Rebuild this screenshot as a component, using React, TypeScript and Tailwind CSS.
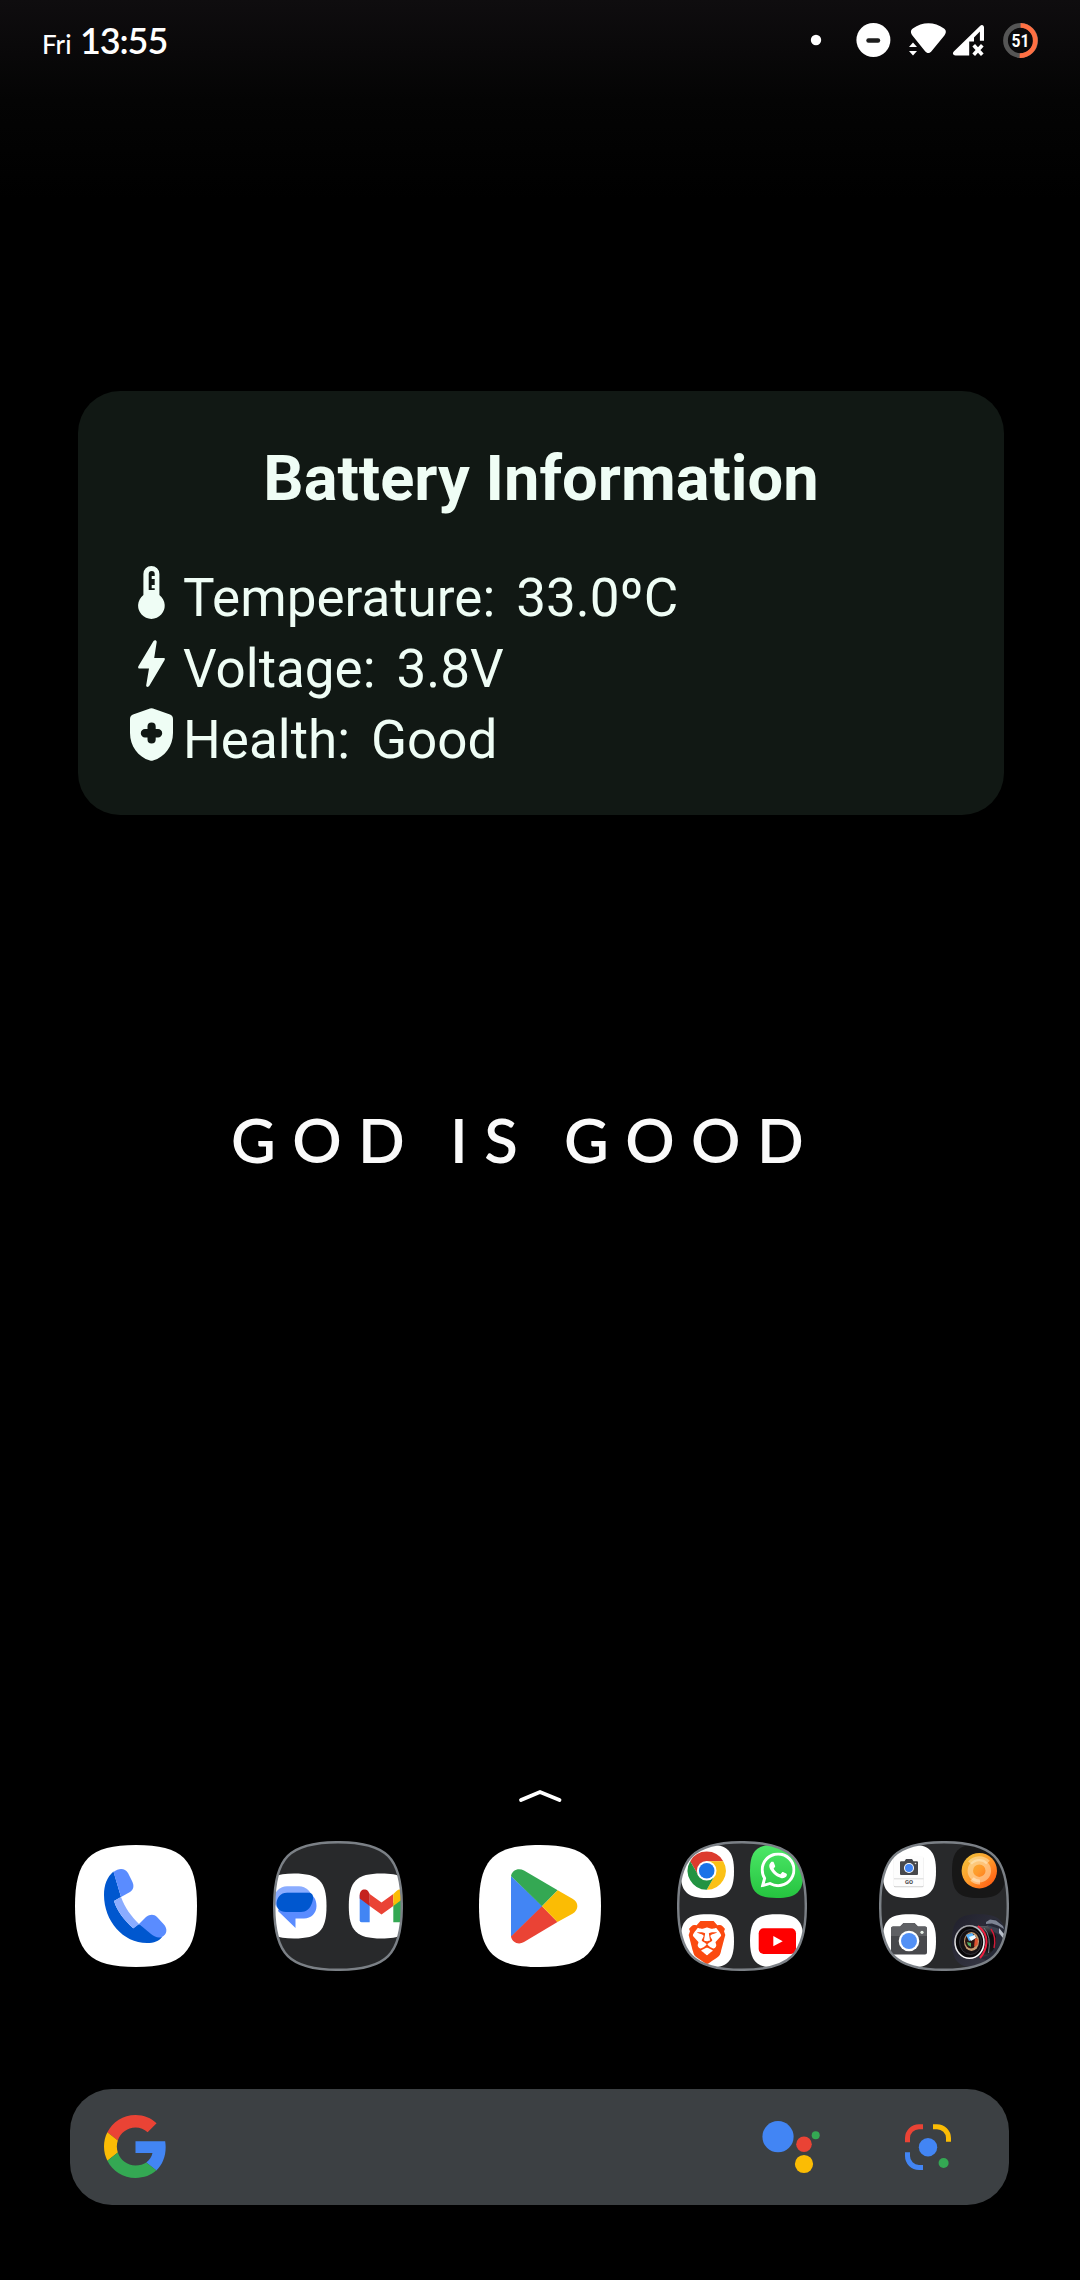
import type { ReactNode } from "react";
import { SiBrave, SiWhatsapp } from "react-icons/si";

function StatusIcons() {
  return (
    <svg className="h-[60px] w-[240px]" viewBox="800 10 240 60" fill="none">
      <circle cx="816" cy="40" r="5.2" fill="#fff" />
      <circle cx="873.4" cy="40" r="17" fill="#fff" />
      <path d="M868.5 40.5H878" stroke="#1c1c1c" strokeWidth="4.4" strokeLinecap="round" />
      <path
        d="M912.4 35.5C910.5 33.3 910.3 30.2 912.8 28.6C922.5 21.4 934.3 21.4 944 28.6C946.5 30.2 946.3 33.3 944.4 35.5L931.5 51.2C929.6 53.6 927 53.6 925.1 51.2Z"
        fill="#fff"
      />
      <path d="M913 42.6L917 47H909ZM913 55.4L917 51H909Z" fill="#fff" />
      <path
        d="M955.5 55.5H969.2V41.4H974V37.4L979.9 31.5V40.8H984V27.5C984 25 981.7 24.3 980 26L953.8 51.6C952.2 53.3 953 55.5 955.5 55.5Z"
        fill="#fff"
      />
      <path d="M973.7 45.2L982.3 54.8M982.3 45.2L973.7 54.8" stroke="#fff" strokeWidth="3.6" />
      <circle cx="1020.6" cy="40.5" r="15.1" stroke="#555" strokeWidth="4.8" />
      <path d="M1020.6 25.4A15.1 15.1 0 1 1 1019.7 55.6" stroke="#ff7043" strokeWidth="4.8" />
      <text
        x="1020.6"
        y="46.6"
        textAnchor="middle"
        fill="#fff"
        className="font-['Roboto',sans-serif] text-[17.5px] font-bold"
        textLength="18"
        lengthAdjust="spacingAndGlyphs"
      >
        51
      </text>
    </svg>
  );
}

function StatusBar() {
  return (
    <header className="flex h-[80px] shrink-0 items-center justify-between pr-10 pl-[42px]">
      <div className="flex items-baseline font-['Lato',sans-serif] text-white">
        <span className="w-[38px] text-[26px] leading-none font-medium">Fri</span>
        <span className="text-[36px] leading-none font-semibold tracking-[-1.1px]">13:55</span>
      </div>
      <StatusIcons />
    </header>
  );
}

function Row({ icon, label, value }: { icon: ReactNode; label: string; value: string }) {
  return (
    <div className="flex h-[71px] items-center">
      <div className="-mt-[13px] mr-[10px] flex w-[43px] shrink-0 justify-center">{icon}</div>
      <span className="mr-[21px] text-[53px] leading-none">{label}</span>
      <span className="text-[53px] leading-none">{value}</span>
    </div>
  );
}

function BatteryCard() {
  return (
    <section className="mt-[311px] ml-[78px] h-[424px] w-[926px] shrink-0 rounded-[42px] bg-[#111814] pt-[55px] font-['Roboto',sans-serif] text-[#effdf5]">
      <h1 className="text-center text-[63.2px] leading-[64px] font-bold">Battery Information</h1>
      <div className="mt-[53px] pl-[52px]">
        <Row
          label="Temperature:"
          value="33.0ºC"
          icon={
            <svg className="h-[53px] w-[27px]" viewBox="0 0 27 53">
              <path
                fill="currentColor"
                fillRule="evenodd"
                d="M5.4 8a8 8 0 0 1 16 0V29A13.3 13.3 0 1 1 5.4 29ZM10.7 8V24H16.7V22.3H13.7V19H16.7V13H13.7V10H16.7V8a3 3 0 0 0-6 0Z"
              />
            </svg>
          }
        />
        <Row
          label="Voltage:"
          value="3.8V"
          icon={
            <svg className="h-[47px] w-[27px]" viewBox="0 0 27 47">
              <path
                fill="currentColor"
                d="M15.5 1C16.5-.5 18.8 0 18.7 2L16.2 18H25.5C27 18 27.2 19 26.5 20.2L11.5 45.5C10.5 47.5 8 47.3 8.2 45.2L11 28.5H1.5C0 28.5-.2 27.2.5 26Z"
              />
            </svg>
          }
        />
        <Row
          label="Health:"
          value="Good"
          icon={
            <svg className="h-[53px] w-[43px]" viewBox="0 0 43 53">
              <path
                fill="currentColor"
                fillRule="evenodd"
                d="M20 .5a4.5 4.5 0 0 1 3 0L40 6.5Q43 7.7 43 11V25C43 38 35 49 23 52.6a5 5 0 0 1-3 0C8 49 0 38 0 25V11Q0 7.7 3 6.5ZM17.5 18.5V21H15a4.2 4.2 0 0 0 0 8.4H17.5V31.5a4.1 4.1 0 0 0 8.2 0V29.4H28a4.2 4.2 0 0 0 0-8.4H25.7V18.5a4.1 4.1 0 0 0-8.2 0Z"
              />
            </svg>
          }
        />
      </div>
    </section>
  );
}

function Motto() {
  return (
    <div className="mt-[294px] flex h-[62px] shrink-0 items-center pl-[231px] font-['Lato',sans-serif] text-[61.5px] leading-none font-semibold tracking-[16.4px] text-[#fafafa] blur-[0.5px]">
      <span className="w-[219px]">GOD</span>
      <span className="w-[114px]">IS</span>
      <span>GOOD</span>
    </div>
  );
}

const SQUIRCLE = "M50 0C12 0 0 12 0 50S12 100 50 100S100 88 100 50S88 0 50 0Z";

function Tile({ x, y, size, fill = "#fff" }: { x: number; y: number; size: number; fill?: string }) {
  return <path d={SQUIRCLE} fill={fill} transform={`translate(${x} ${y}) scale(${size / 100})`} />;
}

function PhoneApp() {
  return (
    <svg className="size-[122px]" viewBox="0 0 122 122">
      <Tile x={0} y={0} size={122} />
      <path fill="#0057cf" d="M38.5 26.5C32 32 29 40 29 50C29 76 48 98 72 98C79 98 84 96 87 92L64 79L58 83C49 75 42 66 39 56L46 52Z" />
      <path fill="#8aacff" d="M39 56L46 52C50 63 56 71 64 79L58.5 83.5C49 75 42 66 39 56Z" />
      <path fill="#5a8cff" d="M38.5 27C44 22.5 50 23 53 28L57 36C59.5 41 58.5 44.5 55 47L46 52Z" />
      <path fill="#5a8cff" d="M64 79L71 72C75 69 79 69 82 72L88.5 79C93 84 92 89 87 92C83 93.5 80 92 76 89Z" />
    </svg>
  );
}

function PlayApp() {
  return (
    <svg className="size-[122px]" viewBox="0 0 122 122">
      <Tile x={0} y={0} size={122} />
      <path fill="#4285f4" d="M32 31L63.5 61.3L32 92Z" />
      <path fill="#34a853" d="M32 31C33 25 39.5 22.3 45 25.5L78.7 45.3L63 61.3Z" />
      <path fill="#ea4335" d="M32 91.6C33 97.6 39.5 100.3 45 97.1L78.5 77L63 61.3Z" />
      <path fill="#fbbc04" d="M78.7 45.3L93.5 53.8C100 57.5 100 65 93.5 68.8L78.5 77L63 61.3Z" />
    </svg>
  );
}

function Folder({ id, children }: { id: string; children: ReactNode }) {
  return (
    <svg className="size-[130px]" viewBox="0 0 130 130">
      <defs>
        <clipPath id={id}>
          <path d={SQUIRCLE} transform="translate(1 1) scale(1.28)" />
        </clipPath>
      </defs>
      <g clipPath={`url(#${id})`}>
        <rect width="130" height="130" fill="#28292b" />
        {children}
      </g>
      <path d={SQUIRCLE} transform="translate(1.2 1.2) scale(1.276)" fill="none" stroke="#7b8086" strokeWidth="1.9" />
    </svg>
  );
}

function MailFolder() {
  return (
    <Folder id="folder-mail">
      <Tile x={-11.5} y={32.5} size={65} />
      <Tile x={75.8} y={32.5} size={65} />
      <rect x="1" y="45.3" width="38" height="26" rx="13" fill="#8aacff" />
      <path fill="#5a8cff" d="M14 51.7H35C41 54 43.5 59 43.5 65C43.5 72 38 77.5 31 77.5H22.5V87L5 70Z" />
      <path fill="#0057cf" d="M13.5 51.7H37C41 53 40.5 58 39 62C37 68 33 71 28 71H13C6.5 71 3.5 67 3.5 62C4 56 8 51.7 13.5 51.7Z" />
      <path fill="#4285f4" d="M86.7 54L96.7 62V81.3H88.5Q86.7 81.3 86.7 79.5Z" />
      <path fill="#34a853" d="M120.3 62L130 55V81.3H120.3Z" />
      <path fill="#ea4335" d="M96.7 53L108.5 61.5L120.3 53V65L108.5 73.5L96.7 65Z" />
      <path fill="#c5221f" d="M86.7 54C86.7 49 91.5 47 95 50L96.7 53V65L86.7 57.5Z" />
      <path fill="#fbbc04" d="M120.3 53L123.5 50C127 47 130.5 49 130.5 54V57.5L120.3 65Z" />
    </Folder>
  );
}

function SocialFolder() {
  return (
    <Folder id="folder-social">
      <defs>
        <linearGradient id="wa" x2="0" y2="1">
          <stop stopColor="#4de868" />
          <stop offset="1" stopColor="#25c33f" />
        </linearGradient>
      </defs>
      <Tile x={3.5} y={3.5} size={53.5} />
      <Tile x={73} y={3.5} size={53.5} fill="url(#wa)" />
      <Tile x={3.5} y={73.3} size={53.5} />
      <Tile x={73} y={73.3} size={53.5} />
      <g transform="translate(29.7 29.7)">
        <path fill="#dc3b2e" d="M-16.5-9.5A19 19 0 0 1 16.5-9.5H0L-8.2 4.7Z" />
        <path fill="#fbc116" d="M16.5-9.5A19 19 0 0 1 0 19L8.2 4.7L0-9.5Z" />
        <path fill="#229342" d="M0 19A19 19 0 0 1-16.5-9.5L-8.2 4.7L8.2 4.7Z" />
        <circle r="9.8" fill="#fff" />
        <circle r="7.8" fill="#1a73e8" />
      </g>
      <SiWhatsapp x={83.5} y={11.5} size={35} color="#fff" />
      <SiBrave x={8.5} y={80} size={43} color="#fb4a10" />
      <rect x="81.7" y="87.3" width="37.3" height="25.7" rx="5" fill="#f00" />
      <path fill="#fff" d="M96.3 95V105.3L105.7 100.2Z" />
    </Folder>
  );
}

function CameraFolder() {
  return (
    <Folder id="folder-camera">
      <defs>
        <linearGradient id="sun" x2="1" y2="1">
          <stop stopColor="#eec73c" />
          <stop offset=".5" stopColor="#ff9a2b" />
          <stop offset="1" stopColor="#ff4e0d" />
        </linearGradient>
        <linearGradient id="dslr" x2="1" y2="1">
          <stop stopColor="#20202c" />
          <stop offset="1" stopColor="#3b3c49" />
        </linearGradient>
        <linearGradient id="barrel" x2="0" y2="1">
          <stop stopColor="#5a5c62" />
          <stop offset=".3" stopColor="#0b0b0d" />
          <stop offset=".75" stopColor="#141416" />
          <stop offset="1" stopColor="#44464c" />
        </linearGradient>
        <linearGradient id="rim" x2="0.3" y2="1">
          <stop stopColor="#8f9096" />
          <stop offset=".5" stopColor="#dcdcde" />
          <stop offset="1" stopColor="#ffffff" />
        </linearGradient>
      </defs>
      <Tile x={3.5} y={3.5} size={53.5} />
      <Tile x={73} y={3.5} size={53.5} fill="#171717" />
      <Tile x={3.5} y={73.3} size={53.5} />
      <Tile x={73} y={73.3} size={53.5} fill="url(#dslr)" />

      <rect x="14.8" y="15.7" width="29.8" height="30.5" rx="1.5" fill="#cfcfcf" />
      <rect x="14.8" y="15" width="29.8" height="30.3" rx="1.5" fill="#fdfdfd" />
      <path stroke="#ccc" strokeWidth=".7" d="M15 37.8H44.5" />
      <path fill="#47484c" d="M22 20.2H25.5L27 18H33L34.5 20.2H38Q39 20.2 39 21.5V33Q39 34 38 34H22Q21 34 21 33V21.5Q21 20.2 22 20.2Z" />
      <circle cx="30" cy="27" r="5" fill="#fff" />
      <circle cx="30" cy="27" r="4" fill="#4285f4" />
      <circle cx="36.5" cy="22.5" r=".8" fill="#ddd" />
      <text x="30" y="43.3" textAnchor="middle" fill="#444" textLength="8" lengthAdjust="spacingAndGlyphs" className="font-['Roboto',sans-serif] text-[5px] font-bold">
        GO
      </text>

      <circle cx="100.3" cy="29.7" r="17.7" fill="url(#sun)" />
      <circle cx="100.3" cy="29.7" r="9" fill="none" stroke="#ffe2b8" strokeOpacity=".55" strokeWidth="5.5" />
      <path d="M91 22A12 12 0 0 1 109 21.5" fill="none" stroke="#fff3d8" strokeOpacity=".45" strokeWidth="5" />
      <path d="M93 38A11 11 0 0 0 101 41" fill="none" stroke="#fff3d8" strokeOpacity=".5" strokeWidth="5" />

      <path fill="#47484c" d="M14 85.5H21L24.5 82H35.5L39 85.5H46Q48 85.5 48 87.5V111.5Q48 113.5 46 113.5H14Q12 113.5 12 111.5V87.5Q12 85.5 14 85.5Z" />
      <path fill="#5f6064" d="M14 85.5H21L24.5 82H35.5L39 85.5H46Q48 85.5 48 87.5V95H12V87.5Q12 85.5 14 85.5Z" />
      <circle cx="30" cy="100" r="10.3" fill="#fff" />
      <circle cx="30" cy="100" r="8" fill="#5290f5" />
      <circle cx="43" cy="91.3" r="1.6" fill="#e6efe6" />

      <path fill="#262936" d="M98 90L104 86L108 79L116 78L122 82L128 88V116L110 120L98 116Z" />
      <path fill="#7d8494" d="M107 81L111 78.5L117 79.5L124 85L125 88L119 84.5L113 82.5L107 83Z" />
      <path fill="#3b4050" d="M108 84L121 88L125 97L119 93L107 87Z" />
      <path fill="#b9bfca" d="M120 87L125 93L124 97L120 92Z" />
      <path fill="url(#barrel)" d="M84 85L108 85Q118 90 117 100T108 115L88 117.5Z" />
      <path fill="none" stroke="#ef1f3f" strokeWidth="2" d="M99 85Q108 92 107.5 101T101 117" />
      <path fill="none" stroke="#d11c38" strokeWidth="1.4" d="M112 88Q117.5 96 115 107" />
      <path fill="none" stroke="#777c85" strokeWidth="1" d="M105 87Q112.5 95 109.5 112" />
      <ellipse cx="90.5" cy="101" rx="14.5" ry="16.3" fill="#09080a" stroke="url(#rim)" strokeWidth="1.6" />
      <ellipse cx="91.5" cy="101" rx="11" ry="12.5" fill="#151114" stroke="#3f3f46" strokeWidth=".8" />
      <ellipse cx="92.5" cy="100.5" rx="7.5" ry="9.5" fill="#c79c70" />
      <ellipse cx="92" cy="100" rx="6" ry="7.5" fill="#2a1512" />
      <path fill="#5cb6ff" d="M87 94L93 92L97 97L90 100Z" />
      <path fill="#f2fbff" d="M90 96L96 94L97 97L92 100Z" />
      <path fill="#e0522f" d="M96 97L99 98L98.5 104L95 106Z" />
      <path fill="#4fae62" d="M88 101L92 102L92 106L89 104Z" />
    </Folder>
  );
}

function Dock() {
  const slots = [PhoneApp, MailFolder, PlayApp, SocialFolder, CameraFolder];
  return (
    <nav className="mx-[35px] mt-[31px] grid h-[142px] shrink-0 grid-cols-5 place-items-center">
      {slots.map((Slot, i) => (
        <Slot key={i} />
      ))}
    </nav>
  );
}

function SearchBar() {
  return (
    <div className="mt-[112px] ml-[70px] flex h-[116px] w-[939px] shrink-0 items-center rounded-[42px] bg-[#3c4043] pr-[58px] pb-[1px] pl-[34px]">
      <svg className="size-[63px]" viewBox="0 0 48 48">
        <path fill="#ea4335" d="M24 9.5c3.54 0 6.71 1.22 9.21 3.6l6.85-6.85C35.9 2.38 30.47 0 24 0 14.62 0 6.51 5.38 2.56 13.22l7.98 6.19C12.43 13.72 17.74 9.5 24 9.5z" />
        <path fill="#4285f4" d="M46.98 24.55c0-1.57-.15-3.09-.38-4.55H24v9.02h12.94c-.58 2.96-2.26 5.48-4.78 7.18l7.73 6c4.51-4.18 7.09-10.36 7.09-17.65z" />
        <path fill="#fbbc05" d="M10.53 28.59c-.48-1.45-.76-2.99-.76-4.59s.27-3.14.76-4.59l-7.98-6.19C.92 16.46 0 20.12 0 24c0 3.88.92 7.54 2.56 10.78l7.97-6.19z" />
        <path fill="#34a853" d="M24 48c6.48 0 11.93-2.13 15.89-5.81l-7.73-6c-2.15 1.45-4.92 2.3-8.16 2.3-6.26 0-11.57-4.22-13.47-9.91l-7.98 6.19C6.51 42.62 14.62 48 24 48z" />
      </svg>
      <svg className="ml-auto h-[54px] w-[60px]" viewBox="0 0 60 54">
        <circle cx="16" cy="16.7" r="15.6" fill="#4285f4" />
        <circle cx="42" cy="24.3" r="7.8" fill="#ea4335" />
        <circle cx="42" cy="44" r="9.1" fill="#fbbc04" />
        <circle cx="53.7" cy="15.3" r="4" fill="#34a853" />
      </svg>
      <svg className="ml-[83px] size-[46px]" viewBox="0 0 46 46" fill="none" strokeWidth="5">
        <path stroke="#ea4335" d="M2.5 18.3V14A11.5 11.5 0 0 1 14 2.7H18" />
        <path stroke="#fbbc04" d="M28 2.7H32A11.5 11.5 0 0 1 43.5 14V17.7" />
        <path stroke="#4285f4" d="M2.5 28.3V32A11.5 11.5 0 0 0 14 43.5H18" />
        <circle cx="23" cy="23.3" r="9.2" fill="#4285f4" />
        <circle cx="38.6" cy="39" r="5" fill="#34a853" />
      </svg>
    </div>
  );
}

export default function App() {
  return (
    <main className="flex h-[2280px] w-[1080px] flex-col overflow-hidden bg-black bg-[linear-gradient(#0f0d0f_0px,#040404_100px,#000_200px)]">
      <StatusBar />
      <BatteryCard />
      <Motto />
      <svg className="mx-auto mt-[617px] h-[16px] w-[48px] shrink-0" viewBox="0 0 48 16" fill="none">
        <path d="M5 12L24 4L43.5 12" stroke="#fff" strokeWidth="3.8" strokeLinecap="round" />
      </svg>
      <Dock />
      <SearchBar />
    </main>
  );
}
